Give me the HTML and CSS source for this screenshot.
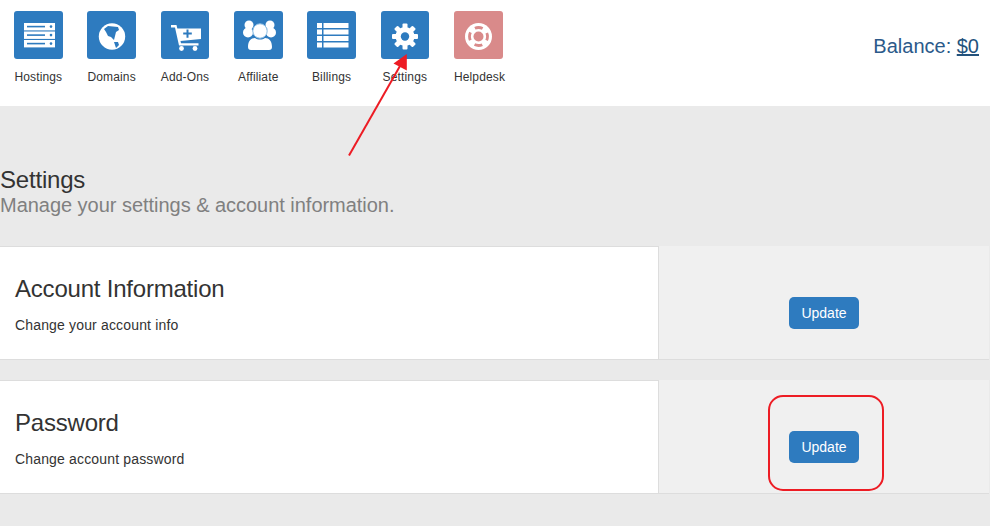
FILE: index.html
```html
<!DOCTYPE html>
<html lang="en">
<head>
<meta charset="utf-8">
<title>Settings</title>
<link rel="stylesheet" href="styles.css">
</head>
<body>
<header class="topbar">
  <nav class="nav">
    <a class="nav-item"><span class="tile"><svg viewBox="0 0 48 48" class="glyph"><g fill="#fff"><rect x="10" y="12" width="31" height="7.4"/><rect x="10" y="20.5" width="31" height="7.4"/><rect x="10" y="29" width="31" height="7.4"/></g><g fill="#2e7bbf"><rect x="13" y="14.8" width="18" height="1.6"/><rect x="13" y="23.3" width="18" height="1.6"/><rect x="13" y="31.8" width="18" height="1.6"/><circle cx="37" cy="15.6" r="1.3"/><circle cx="37" cy="24.1" r="1.3"/><circle cx="37" cy="32.6" r="1.3"/></g></svg></span><span class="label">Hostings</span></a>
    <a class="nav-item"><span class="tile"><svg viewBox="0 0 48 48" class="glyph"><circle cx="25" cy="25.5" r="13.2" fill="#fff"/><path fill="#2e7bbf" d="M17 18l4-3 10 1 1 3-3 2-1 4-1 4-3-3-3-1-2-4zM27 31l4 0 1 3-3 3z"/></svg></span><span class="label">Domains</span></a>
    <a class="nav-item"><span class="tile"><svg viewBox="0 0 48 48" class="glyph"><path fill="#fff" d="M10 14h5.500l.8 3.500H40V28l-20.500 2 .5 2.200h17.500v2.300H18L14 16.500h-4z"/><circle cx="20.500" cy="37.500" r="2.400" fill="#fff"/><circle cx="34" cy="37.500" r="2.400" fill="#fff"/><path fill="#2e7bbf" d="M25.500 18.500h2v3h3.300v2h-3.300v3.300h-2v-3.300h-3.300v-2h3.300z"/></svg></span><span class="label">Add-Ons</span></a>
    <a class="nav-item"><span class="tile"><svg viewBox="0 0 48 48" class="glyph"><g fill="#fff"><circle cx="15" cy="14" r="4.500"/><circle cx="36" cy="14" r="4.500"/><circle cx="14" cy="21.500" r="5"/><circle cx="37" cy="21.500" r="5"/><circle cx="26" cy="20" r="7.200" stroke="#8fc0e6" stroke-width="1"/><path d="M14 36c0-6 3-9 7-9 1.500 1 3 1.500 5 1.500s3.500-.5 5-1.500c4 0 7 3 7 9 0 2-1 3-3 3H17c-2 0-3-1-3-3z"/></g></svg></span><span class="label">Affiliate</span></a>
    <a class="nav-item"><span class="tile"><svg viewBox="0 0 48 48" class="glyph"><g fill="#fff"><rect x="10" y="12" width="5" height="5"/><rect x="16.500" y="12" width="25" height="5"/><rect x="10" y="18.500" width="5" height="5"/><rect x="16.500" y="18.500" width="25" height="5"/><rect x="10" y="25" width="5" height="5"/><rect x="16.500" y="25" width="25" height="5"/><rect x="10" y="31.500" width="5" height="5"/><rect x="16.500" y="31.500" width="25" height="5"/></g></svg></span><span class="label">Billings</span></a>
    <a class="nav-item"><span class="tile"><svg viewBox="0 0 48 48" class="glyph"><g fill="#fff" transform="translate(24 25.500)"><circle r="9.500"/><rect x="-2.500" y="-13" width="5" height="26" rx="1"/><rect x="-2.500" y="-13" width="5" height="26" rx="1" transform="rotate(45)"/><rect x="-2.500" y="-13" width="5" height="26" rx="1" transform="rotate(90)"/><rect x="-2.500" y="-13" width="5" height="26" rx="1" transform="rotate(135)"/></g><circle cx="24" cy="25.500" r="4.200" fill="#2e7bbf"/></svg></span><span class="label">Settings</span></a>
    <a class="nav-item"><span class="tile tile-muted"><svg viewBox="0 0 48 48" class="glyph"><circle cx="24.500" cy="25.500" r="13.500" fill="#fff"/><circle cx="24.500" cy="25.500" r="9" fill="none" stroke="#d98a8a" stroke-width="2.800" stroke-dasharray="8 6.140" stroke-dashoffset="4"/><circle cx="24.500" cy="25.500" r="5" fill="#d98a8a"/></svg></span><span class="label label-start">Helpdesk</span></a>
  </nav>
  <div class="balance">Balance: <a class="balance-link">$0</a></div>
</header>
<main class="content">
  <section class="intro">
    <h1 class="intro-title">Settings</h1>
    <p class="intro-sub">Manage your settings &amp; account information.</p>
  </section>
  <section class="row">
    <div class="row-main">
      <h2 class="row-title">Account Information</h2>
      <p class="row-desc">Change your account info</p>
    </div>
    <div class="row-side"><button class="btn">Update</button></div>
  </section>
  <section class="row">
    <div class="row-main">
      <h2 class="row-title">Password</h2>
      <p class="row-desc">Change account password</p>
    </div>
    <div class="row-side"><button class="btn">Update</button></div>
  </section>
</main>
<svg class="annotations" width="990" height="526" viewBox="0 0 990 526">
  <path d="M349 155.500L400 66" stroke="#ed1c24" stroke-width="2" fill="none"/>
  <path d="M406.800 54L393.500 63.500L406.800 70.500z" fill="#ed1c24"/>
  <rect x="769" y="396" width="114" height="94" rx="14" fill="none" stroke="#ed1c24" stroke-width="2"/>
</svg>
</body>
</html>
```
FILE: styles.css
```css
* { box-sizing: border-box; }
html, body { margin: 0; padding: 0; }
body {
  position: relative;
  width: 990px;
  height: 526px;
  overflow: hidden;
  background: #eaeaea;
  font-family: "Liberation Sans", Arial, sans-serif;
  color: #333;
}
.topbar {
  height: 106px;
  background: #fff;
  display: flex;
  justify-content: space-between;
  padding: 11px 11px 0 14px;
}
.nav { display: flex; gap: 24.67px; }
.nav-item {
  width: 48.67px;
  display: flex;
  flex-direction: column;
  align-items: center;
}
.tile {
  width: 100%;
  height: 48px;
  background: #2e7bbf;
  border-radius: 3px;
  display: block;
  flex: none;
}
.tile-muted { background: #d98a8a; }
.glyph { display: block; width: 48px; height: 48px; }
.label {
  margin-top: 11px;
  font-size: 12px;
  line-height: 14px;
  letter-spacing: 0.15px;
  white-space: nowrap;
  color: #333;
}
.label-start { align-self: flex-start; }
.balance {
  margin-top: 24px;
  font-size: 20px;
  line-height: 22px;
  color: #2c5a8a;
}
.balance-link { color: #23527c; text-decoration: underline; }
.intro { padding: 60px 0 29px; }
.intro-title {
  margin: 0;
  font-weight: 400;
  font-size: 24px;
  line-height: 28px;
  letter-spacing: -0.2px;
  color: #333;
}
.intro-sub {
  margin: 0;
  font-size: 20px;
  line-height: 23px;
  letter-spacing: -0.03px;
  color: #808080;
}
.row {
  height: 114px;
  display: flex;
  margin-bottom: 20px;
  width: 989px;
}
.row-main {
  width: 659px;
  background: #fff;
  border-top: 1px solid #ddd;
  border-bottom: 1px solid #ddd;
  border-right: 1px solid #ddd;
  padding: 28px 15px 0;
}
.row-title {
  margin: 0;
  font-weight: 400;
  font-size: 24px;
  line-height: 28px;
  letter-spacing: -0.21px;
  color: #333;
}
.row-desc {
  margin: 12px 0 0;
  font-size: 14px;
  line-height: 20px;
  letter-spacing: 0.16px;
  color: #333;
}
.row-side {
  flex: 1;
  background: #f0f0f0;
  border-bottom: 1px solid #ddd;
  display: flex;
  justify-content: center;
  padding-top: 51px;
}
.btn {
  width: 70px;
  height: 32px;
  padding: 0;
  border: 0;
  border-radius: 5px;
  background: #2e7bbf;
  color: #fff;
  font-family: inherit;
  font-size: 14px;
}
.annotations { position: absolute; left: 0; top: 0; pointer-events: none; }
```
